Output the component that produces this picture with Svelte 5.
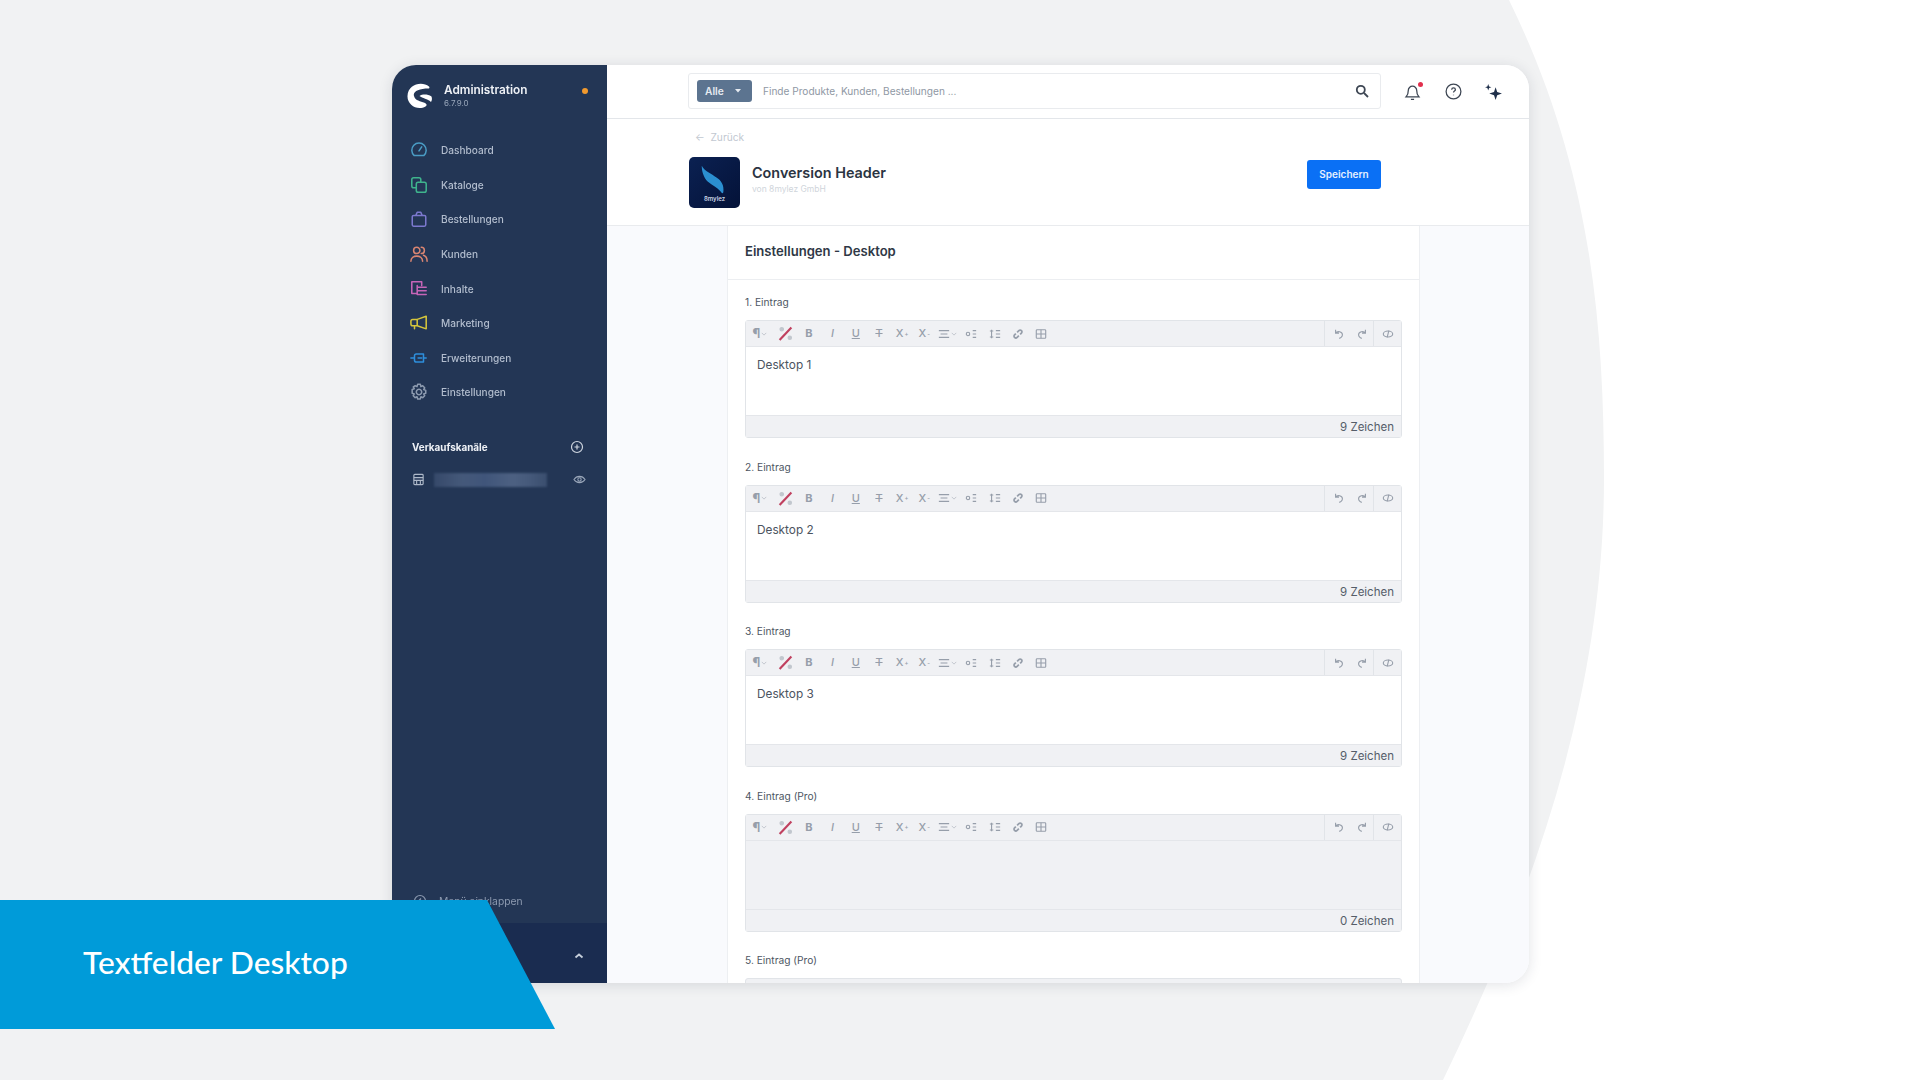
<script>
  const nav = [
    { label: 'Dashboard', color: '#4a9cc4', d: 'M4.700 16.200a8 8 0 1 1 10.600 0zM10 11l3-4.500' },
    { label: 'Kataloge', color: '#3fb48d', d: 'M7 13H4a2 2 0 0 1-2-2V4a2 2 0 0 1 2-2h6a2 2 0 0 1 2 2v3M9 7h7a2 2 0 0 1 2 2v7a2 2 0 0 1-2 2H9a2 2 0 0 1-2-2V9a2 2 0 0 1 2-2z' },
    { label: 'Bestellungen', color: '#7c79cf', d: 'M4 6h12a1.500 1.500 0 0 1 1.500 1.500v9A1.500 1.500 0 0 1 16 18H4a1.500 1.500 0 0 1-1.500-1.500v-9A1.500 1.500 0 0 1 4 6zM6.500 6l1.500-3.500h4L13.500 6' },
    { label: 'Kunden', color: '#d98572', d: 'M4 6a3.500 3.500 0 1 1 7 0a3.500 3.500 0 0 1-7 0zM1 18c0-7.500 13-7.500 13 0M12.500 2.500a3.500 3.500 0 0 1 0 7M15 11.500c2.500.8 4 3 4 6.500' },
    { label: 'Inhalte', color: '#c665b8', d: 'M13 6V2H2v13h5M9 8h9M9 12h9M9 16h9M8 6v10' },
    { label: 'Marketing', color: '#d6c63c', d: 'M18 2.500v14L8 13H3a2 2 0 0 1-2-2V8a2 2 0 0 1 2-2h5zM8 6v7M5 13v3.500' },
    { label: 'Erweiterungen', color: '#2e8fdc', d: 'M1 10h4M15 10h3M7 5.500h8v9H7a2 2 0 0 1-2-2v-5a2 2 0 0 1 2-2zM9 10h4' },
    { label: 'Einstellungen', color: '#8d9bb0', d: 'M8.500 1.500h3l.6 2.500 2-.9 2.200 2.200-1.100 2 2.300.9v3.100l-2.300.8 1.100 2-2.200 2.200-2-1-.6 2.400h-3l-.7-2.400-2 1-2.200-2.200 1.100-2-2.300-.8V7.200l2.300-.9-1.100-2L5.800 3.100l2 .9zM10 7a3 3 0 1 0 .01 0z' }
  ];
  const entries = [
    { label: '1. Eintrag', value: 'Desktop 1', count: '9 Zeichen' },
    { label: '2. Eintrag', value: 'Desktop 2', count: '9 Zeichen' },
    { label: '3. Eintrag', value: 'Desktop 3', count: '9 Zeichen' },
    { label: '4. Eintrag (Pro)', value: '', count: '0 Zeichen', disabled: true }
  ];
</script>

{#snippet toolbar()}
  <div class="toolbar">
    <div class="tools">
      <span class="tool w26"><span class="glyph para">¶</span><svg class="caret" viewBox="0 0 8 8"><path d="M1 2.500l3 3 3-3" /></svg></span>
      <span class="tool w24"><svg class="ic large" viewBox="0 0 14 14"><circle class="soft" cx="3.500" cy="3" r="1.500" /><circle class="soft" cx="11" cy="11" r="1.500" /><path class="slash" d="M1.500 13L12.500 1.500" /></svg></span>
      <span class="tool w24 glyph b">B</span>
      <span class="tool w23 glyph it">I</span>
      <span class="tool w23 glyph u">U</span>
      <span class="tool w23 glyph s">T</span>
      <span class="tool w23 glyph">X<sup>+</sup></span>
      <span class="tool w21 glyph">X<sub>-</sub></span>
      <span class="tool w25"><svg class="ic" viewBox="0 0 14 14"><path d="M1 3h12M3 7h8M1 11h12" /></svg><svg class="caret" viewBox="0 0 8 8"><path d="M1 2.500l3 3 3-3" /></svg></span>
      <span class="tool w23"><svg class="ic" viewBox="0 0 14 14"><circle cx="3.500" cy="7" r="2" /><path d="M9 3h4M9 7h4M9 11h4" /></svg></span>
      <span class="tool w23"><svg class="ic" viewBox="0 0 14 14"><path d="M3 2v10M1 3.500h4M1 10.500h4M8 3h5M8 7h5M8 11h5" /></svg></span>
      <span class="tool w23"><svg class="ic thick" viewBox="0 0 14 14"><path d="M6 5L8 3a2.100 2.100 0 0 1 3 3L9.500 7.500M8 9l-2 2a2.100 2.100 0 0 1-3-3l1.500-1.500" /></svg></span>
      <span class="tool w23"><svg class="ic" viewBox="0 0 14 14"><rect x="1.500" y="2" width="11" height="10" rx="1" /><path d="M7 2v10M1.500 7h11" /></svg></span>
    </div>
    <div class="tools-right">
      <span class="tool-r"><svg class="ic" viewBox="0 0 14 14"><path d="M3 2v4h4M3 6c2-3 8-2 8 2 0 2-2 4-4 4" /></svg></span>
      <span class="tool-r"><svg class="ic" viewBox="0 0 14 14"><path d="M11 2v4H7M11 6C9 3 3 4 3 8c0 2 2 4 4 4" /></svg></span>
      <span class="tool-r last"><svg class="ic" viewBox="0 0 14 14"><ellipse cx="7" cy="7" rx="5.500" ry="3.500" /><path d="M8 3L6 11" /></svg></span>
    </div>
  </div>
{/snippet}

<div class="stage">
  <svg class="backdrop" viewBox="0 0 1920 1080" aria-hidden="true">
    <path d="M1509 0C1590 165 1604 320 1604 478C1604 700 1530 900 1443 1080H1920V0Z" />
  </svg>

  <div class="window">
    <aside class="sidebar">
      <div class="brand">
        <svg class="logo" viewBox="0 0 26 26">
          <path d="M22 3.500C15-2 1 1 .5 13c-.4 9 10 15 18 10.500 2-1.200 1-3-1-3.800-4-1.600-9-1.700-10.500-6.700C5.500 8.500 12 5.500 21.500 5.500c1 0 1.200-1.300.5-2z" />
          <path d="M24.500 13.500c-4-2.500-9-2.500-12-.5 3 2.500 8 2.500 11.500 6 1-1.500 1.300-3.500.5-5.500z" />
        </svg>
        <div class="brand-text">
          <strong>Administration</strong>
          <small>6.7.9.0</small>
        </div>
        <span class="status"></span>
      </div>

      <nav class="nav">
        {#each nav as item}
          <div class="nav-item">
            <svg class="nav-icon" viewBox="0 0 20 20" style="stroke: {item.color}"><path d={item.d} /></svg>
            <span>{item.label}</span>
          </div>
        {/each}
      </nav>

      <div class="channels">
        <div class="channels-head">
          <span>Verkaufskanäle</span>
          <svg viewBox="0 0 14 14"><circle cx="7" cy="7" r="5.500" /><path d="M7 4.500v5M4.500 7h5" /></svg>
        </div>
        <div class="channel">
          <svg class="store" viewBox="0 0 14 14"><rect x="2" y="1.500" width="10" height="11" rx="1" /><path d="M2 5h10M2 8h10M5 8v4.500M9 8v4.500" /></svg>
          <span class="blur"></span>
          <svg class="eye" viewBox="0 0 14 14"><path d="M1 7c3-4.500 9-4.500 12 0-3 4.500-9 4.500-12 0z" /><circle cx="7" cy="7" r="1.800" /></svg>
        </div>
      </div>

      <div class="collapse">
        <svg viewBox="0 0 14 14"><circle cx="7" cy="7" r="5.500" /><path d="M8 4.500L5.500 7 8 9.500" /></svg>
        <span>Menü einklappen</span>
      </div>
      <div class="user">
        <svg viewBox="0 0 10 10"><path d="M1.500 6.500L5 3.500l3.500 3" /></svg>
      </div>
    </aside>

    <main class="main">
      <header class="topbar">
        <div class="search">
          <span class="chip">Alle <svg viewBox="0 0 8 8"><path d="M1 2l3 3.500L7 2z" /></svg></span>
          <span class="placeholder">Finde Produkte, Kunden, Bestellungen ...</span>
          <svg class="loupe" viewBox="0 0 14 14"><circle cx="5.800" cy="5.800" r="4" /><path d="M9 9l4 4" /></svg>
        </div>
        <div class="top-icons">
          <span class="bell">
            <svg viewBox="0 0 18 18"><path d="M3 14h12c-1.500-1.500-2-3-2-6a4 4 0 0 0-8 0c0 3-.5 4.500-2 6zM7.500 16.500h3" /></svg>
            <i></i>
          </span>
          <svg class="help" viewBox="0 0 18 18"><circle cx="9" cy="9" r="7" /><path d="M7.300 7.300c0-2.300 3.500-2.300 3.500 0 0 1.200-1.800 1.300-1.800 2.600M9 12v.6" /></svg>
          <svg class="spark" viewBox="0 0 18 18"><path d="M11 5l1.500 4.500L17 11l-4.500 1.500L11 17l-1.500-4.500L5 11l4.500-1.500zM4 2l.8 2.200L7 5l-2.200.8L4 8l-.8-2.200L1 5l2.200-.8z" /></svg>
        </div>
      </header>

      <section class="head">
        <div class="back">← &nbsp;Zurück</div>
        <div class="head-row">
          <div class="plugin-logo">
            <svg viewBox="0 0 52 52"><path d="M13 9c3 6 10 8 15 12 5 3 8 8 7 15-1 2-2 0-3-1-3-4-8-6-13-10-4-4-6-10-6-16z" fill="#2b8fd0" /></svg>
            <span>8mylez</span>
          </div>
          <div class="plugin-meta">
            <h1>Conversion Header</h1>
            <p>von 8mylez GmbH</p>
          </div>
          <button class="save">Speichern</button>
        </div>
      </section>

      <section class="content">
        <div class="card">
          <h2>Einstellungen - Desktop</h2>
          <div class="fields">
            {#each entries as entry}
              <div class="field">
                <div class="label">{entry.label}</div>
                <div class="editor" class:disabled={entry.disabled}>
                  {@render toolbar()}
                  <div class="body">{entry.value}</div>
                  <div class="foot">{entry.count}</div>
                </div>
              </div>
            {/each}
            <div class="field">
              <div class="label">5. Eintrag (Pro)</div>
              <div class="editor disabled stub"></div>
            </div>
          </div>
        </div>
      </section>
    </main>
  </div>

  <div class="ribbon"><span>Textfelder Desktop</span></div>
</div>

<style>
  :global(body) { margin: 0; background: #f1f2f3; }
  .stage {
    position: relative;
    width: 1920px;
    height: 1080px;
    overflow: hidden;
    background: #f1f2f3;
    padding: 65px 0 0 392px;
    box-sizing: border-box;
    font-family: Inter, "Noto Sans", sans-serif;
  }
  .backdrop { position: absolute; inset: 0; width: 1920px; height: 1080px; }
  .backdrop path { fill: #fff; }

  .window {
    position: relative;
    width: 1137px;
    height: 918px;
    display: flex;
    border-radius: 24px 24px 24px 0;
    overflow: hidden;
    background: #fff;
    box-shadow: 0 2px 14px rgba(30, 40, 60, 0.13);
    filter: blur(0.35px);
  }

  .sidebar {
    width: 215px;
    flex: none;
    background: #233655;
    display: flex;
    flex-direction: column;
    color: #b6c1d1;
  }
  .brand { display: flex; align-items: center; height: 60px; padding: 0 18px 0 15px; }
  .logo { width: 26px; height: 26px; fill: #fff; margin-top: 1px; flex: none; }
  .brand-text { display: flex; flex-direction: column; margin-left: 11px; margin-top: 0; }
  .brand-text strong { font-size: 11.800px; line-height: 15px; font-weight: 600; color: #eef1f6; }
  .brand-text small { font-size: 8px; line-height: 10px; color: #9aa8bc; }
  .status { width: 6px; height: 6px; border-radius: 50%; background: #f19a2e; margin-left: auto; margin-top: -8px; margin-right: 1px; }

  .nav { margin-top: 8px; display: flex; flex-direction: column; }
  .nav-item { height: 34.600px; display: flex; align-items: center; padding-left: 18px; font-size: 10.100px; font-weight: 500; color: #b2bdce; }
  .nav-icon { width: 18px; height: 18px; fill: none; stroke-width: 1.700; margin-right: 13px; stroke-linejoin: round; stroke-linecap: round; flex: none; }

  .channels { margin-top: 27px; padding: 0 21px 0 20px; }
  .channels-head { display: flex; justify-content: space-between; align-items: center; height: 20px; font-size: 9.900px; font-weight: 700; color: #eef1f6; }
  .channels-head svg { width: 14px; height: 14px; fill: none; stroke: #cfd6e0; stroke-width: 1.200; margin-right: 2px; }
  .channel { display: flex; align-items: center; margin-top: 13px; height: 20px; }
  .store { width: 13px; height: 13px; fill: none; stroke: #aeb9c9; stroke-width: 1.200; flex: none; }
  .blur {
    width: 113px; height: 14px; margin-left: 9px; flex: none;
    background: linear-gradient(90deg, #36496a 0, #45597a 25%, #40557a 45%, #4d6182 70%, #45597a 85%, #3a4e6e 100%);
    filter: blur(1px);
  }
  .eye { width: 13px; height: 13px; fill: none; stroke: #9aa7ba; stroke-width: 1.100; margin-left: auto; }

  .collapse { margin-top: auto; display: flex; align-items: center; height: 45px; padding-left: 21px; font-size: 10.300px; color: #8d9ab0; gap: 12px; }
  .collapse svg { width: 14px; height: 14px; fill: none; stroke: #8d9ab0; stroke-width: 1.200; }
  .user { height: 60px; background: #1a2c50; display: flex; align-items: center; justify-content: flex-end; padding: 6px 23px 0 0; box-sizing: border-box; }
  .user svg { width: 10px; height: 10px; fill: none; stroke: #c6cfdb; stroke-width: 1.800; }

  .main { flex: 1; min-width: 0; display: flex; flex-direction: column; background: #fff; }
  .topbar { flex: none; display: flex; align-items: center; border-bottom: 1px solid #e3e6ea; padding: 0 0 1px 81px; box-sizing: content-box; height: 52px; }
  .search {
    width: 693px; height: 36px; box-sizing: border-box;
    border: 1px solid #e9ebee; border-radius: 3px;
    display: flex; align-items: center; padding-left: 8px;
  }
  .chip {
    width: 55px; height: 22px; background: #5c7490; border-radius: 3px; color: #e6ebf1;
    font-size: 10.200px; font-weight: 600; display: flex; align-items: center; padding-left: 8px; box-sizing: border-box; gap: 10px;
  }
  .chip svg { width: 8px; height: 8px; fill: #e6ebf1; }
  .placeholder { margin-left: 11px; font-size: 10.100px; color: #8f98a4; }
  .loupe { width: 14px; height: 14px; margin-left: auto; margin-right: 11px; fill: none; stroke: #3d4653; stroke-width: 1.800; }
  .top-icons { display: flex; align-items: center; margin-left: 22px; gap: 21.500px; }
  .bell { position: relative; width: 19px; height: 19px; display: block; }
  .bell svg { width: 19px; height: 19px; display: block; fill: none; stroke: #3d4653; stroke-width: 1.200; }
  .bell i { position: absolute; top: 0; right: -1px; width: 5px; height: 5px; border-radius: 50%; background: #e2304d; }
  .help { width: 19px; height: 19px; fill: none; stroke: #3d4653; stroke-width: 1.200; }
  .spark { width: 19px; height: 19px; fill: #1f2f4a; }

  .head { height: 107px; flex: none; border-bottom: 1px solid #e9ebee; padding: 11px 148px 0 82px; box-sizing: border-box; }
  .back { font-size: 10.200px; color: #c2c8d1; line-height: 14px; padding-left: 6px; }
  .head-row { display: flex; align-items: center; margin-top: 13px; }
  .plugin-logo { width: 51px; height: 51px; border-radius: 5px; background: linear-gradient(135deg, #0b2152, #041238); position: relative; overflow: hidden; flex: none; }
  .plugin-logo svg { width: 51px; height: 51px; display: block; }
  .plugin-logo span { position: absolute; left: 0; right: 0; bottom: 6px; text-align: center; font-size: 6px; font-weight: 600; color: #cdd6e6; }
  .plugin-meta { margin-left: 12px; margin-top: -7px; }
  .plugin-meta h1 { margin: 0; font-size: 14.400px; line-height: 20px; font-weight: 600; color: #2b3442; }
  .plugin-meta p { margin: 0; font-size: 8.500px; line-height: 12px; color: #d0d5db; }
  .save {
    margin-left: auto; width: 74px; height: 29px; border: 0; border-radius: 3px;
    background: #0a70f5; color: #e4efff; font: 600 10px Inter, sans-serif; padding: 0; margin-bottom: 17px;
  }

  .content { flex: 1; min-height: 0; overflow: hidden; background: #f9fafd; padding: 0 109px 0 120px; }
  .card { background: #fff; border-left: 1px solid #edeff2; border-right: 1px solid #edeff2; height: 100%; box-sizing: border-box; }
  .card h2 { margin: 0; height: 54px; line-height: 51px; padding-left: 17px; font-size: 13.100px; font-weight: 600; color: #2f3846; border-bottom: 1px solid #eceef1; box-sizing: border-box; }
  .fields { padding: 15px 17px 0 17px; display: flex; flex-direction: column; gap: 21.500px; }
  .label { font-size: 10.200px; line-height: 14px; height: 25px; color: #4d5663; }
  .editor { border: 1px solid #e1e4e8; border-radius: 3px; background: #fff; width: 657px; box-sizing: border-box; }
  .toolbar { height: 25px; background: #f0f1f4; border-bottom: 1px solid #e4e6ea; display: flex; justify-content: space-between; }
  .tools { display: flex; align-items: center; padding-left: 1px; }
  .tool { display: flex; align-items: center; justify-content: center; height: 25px; color: #9ca4af; flex: none; gap: 1px; }
  .w21 { width: 21px; } .w23 { width: 23.200px; } .w24 { width: 24px; } .w25 { width: 25px; } .w26 { width: 26px; }
  .glyph { font-size: 11px; line-height: 1; color: #969eaa; font-weight: 500; }
  .para { font-size: 13px; font-weight: 700; }
  .glyph sup, .glyph sub { font-size: 6px; line-height: 0; }
  .b { font-weight: 700; }
  .it { font-style: italic; }
  .u { text-decoration: underline; }
  .s { text-decoration: line-through; }
  .ic { width: 12px; height: 12px; fill: none; stroke: #969eaa; stroke-width: 1.300; }
  .ic.large { width: 15px; height: 15px; }
  .ic.thick { stroke-width: 2; }
  .ic .slash { stroke: #c0405f; stroke-width: 2; }
  .ic .soft { stroke: #c2c7ce; fill: #c2c7ce; }
  .caret { width: 6px; height: 6px; fill: none; stroke: #b4bac3; stroke-width: 1; }
  .tools-right { display: flex; }
  .tool-r { width: 23px; height: 25px; display: flex; align-items: center; justify-content: center; }
  .tool-r:first-child { border-left: 1px solid #e1e4e8; width: 26px; box-sizing: border-box; padding-left: 3px; }
  .tool-r.last { border-left: 1px solid #e1e4e8; width: 28px; box-sizing: border-box; }
  .body { height: 68px; padding: 10px 11px 0; box-sizing: border-box; font-size: 11.800px; line-height: 16px; color: #4b5360; }
  .foot { height: 22px; line-height: 23px; background: #f0f1f4; border-top: 1px solid #e4e6ea; text-align: right; padding-right: 7px; font-size: 11.500px; color: #555d69; box-sizing: border-box; }
  .editor.disabled .body { background: #f0f1f4; }
  .stub { height: 30px; background: #f0f1f4; }

  .ribbon {
    position: absolute;
    left: 0;
    top: 900px;
    width: 555px;
    height: 129px;
    background: #009bd9;
    clip-path: polygon(0 0, 487px 0, 100% 100%, 0 100%);
    display: flex;
    align-items: center;
    padding: 0 0 6px 83px;
    box-sizing: border-box;
    color: #fff;
    font: 500 31.700px Lato, "Open Sans", sans-serif;
  }
</style>
